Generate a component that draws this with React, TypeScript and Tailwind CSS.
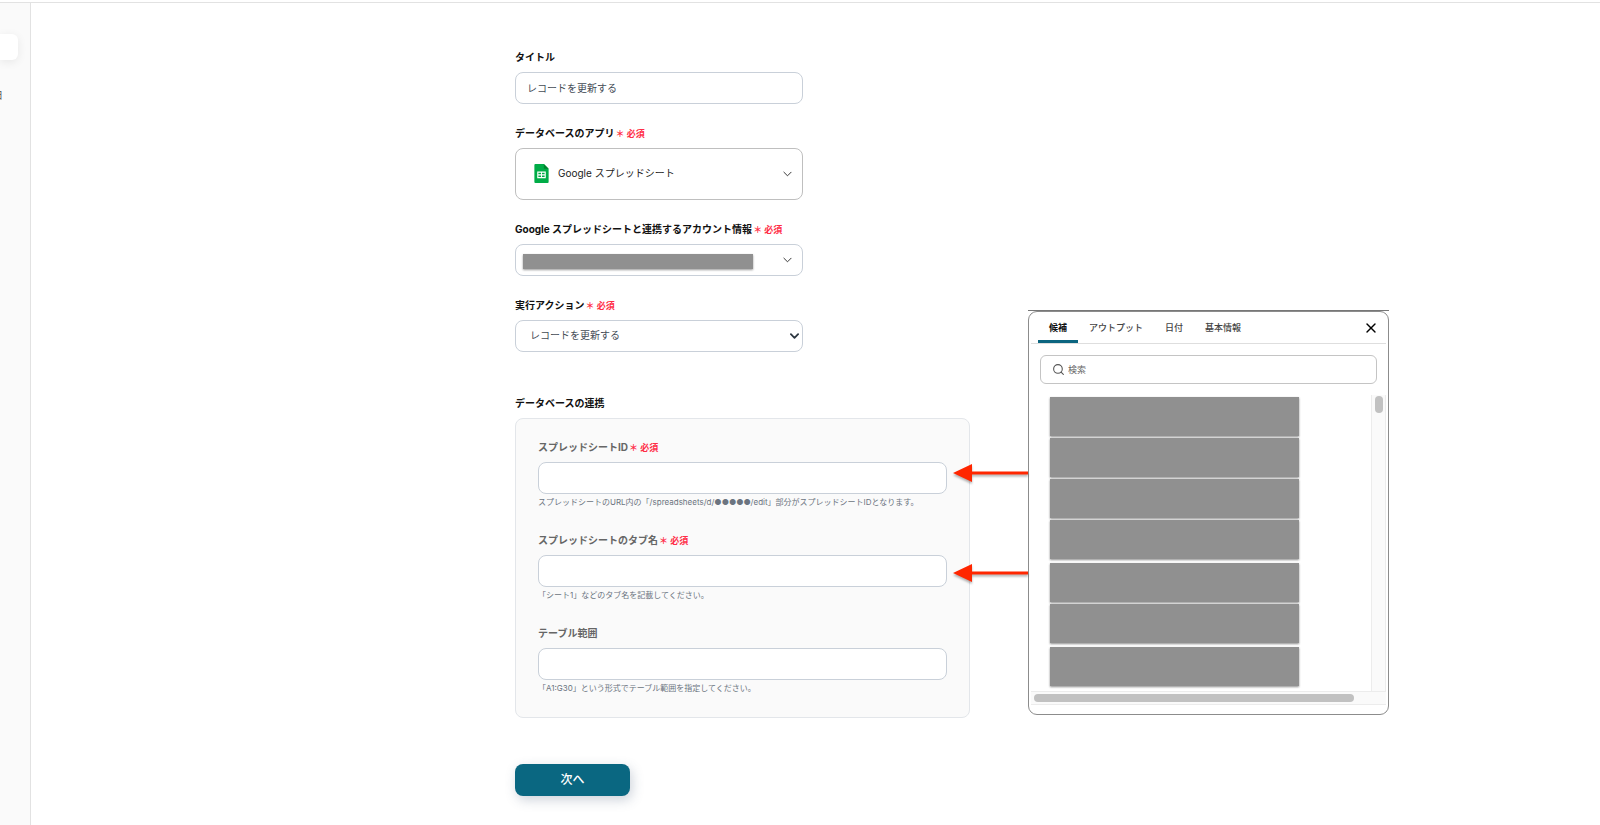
import type { ReactNode } from 'react';
import { Search, X } from 'lucide-react';

const tabs = ['候補', 'アウトプット', '日付', '基本情報'];

// masked candidates, in the groups they are listed in
const candidateGroups = [4, 2, 1];

const databaseFields = [
  {
    id: 'spreadsheet-id',
    label: 'スプレッドシートID',
    required: true,
    help: 'スプレッドシートのURL内の「/spreadsheets/d/●●●●●/edit」部分がスプレッドシートIDとなります。',
  },
  {
    id: 'tab-name',
    label: 'スプレッドシートのタブ名',
    required: true,
    help: '「シート1」などのタブ名を記載してください。',
  },
  {
    id: 'table-range',
    label: 'テーブル範囲',
    required: false,
    help: '「A1:G30」という形式でテーブル範囲を指定してください。',
  },
];

function Required() {
  return <span className="ml-px text-[9px] leading-none font-bold text-[#ff2d46]">＊ 必須</span>;
}

function Field({ id, label, required, children }: { id: string; label: string; required?: boolean; children: ReactNode }) {
  return (
    <div>
      <label htmlFor={id} className="mb-[6px] flex h-[18px] items-center text-[10px] font-bold text-[#111111]">
        {label}
        {required && <Required />}
      </label>
      {children}
    </div>
  );
}

function Chevron({ className }: { className: string }) {
  return (
    <svg viewBox="0 0 10 6" className={className} fill="none" stroke="currentColor" strokeLinecap="round" strokeLinejoin="round">
      <path d="M1 1l4 4 4-4" />
    </svg>
  );
}

function SheetsIcon({ className }: { className: string }) {
  return (
    <svg viewBox="0 0 15 20" className={className}>
      <path d="M1 0h9l5 5v14a1 1 0 0 1-1 1H1a1 1 0 0 1-1-1V1a1 1 0 0 1 1-1z" fill="#00ac47" />
      <path d="M10 0l5 5h-5z" fill="#00832d" />
      <path d="M3 8h9v7H3zM4.2 9.2v1.7H7V9.2zM8 9.2v1.7h2.8V9.2zM4.2 12v1.8H7V12zM8 12v1.8h2.8V12z" fill="#fff" fillRule="evenodd" />
    </svg>
  );
}

function Arrow({ className }: { className: string }) {
  return (
    <svg viewBox="0 0 75 20" className={`absolute right-full h-5 w-[75px] drop-shadow-[0_2px_1px_rgba(0,0,0,0.3)] ${className}`} fill="#ff2600">
      <path d="M0 10L19 1v7.5h56v3H19V19z" />
    </svg>
  );
}

function CandidatePanel() {
  return (
    <aside className="absolute top-[307px] left-[513px] w-[361px] border-t border-[#777777]">
      <Arrow className="top-[152px]" />
      <Arrow className="top-[252px]" />
      <div className="flex h-[404px] flex-col rounded-[9px] border border-[#8c8c8c] bg-white px-[2px] pb-[9px]">
        <div className="flex h-[32px] shrink-0 items-stretch border-b border-[#dedede] pl-[7px]" role="tablist">
          {tabs.map((tab, i) => (
            <button
              key={tab}
              type="button"
              role="tab"
              aria-selected={i === 0}
              className={
                i === 0
                  ? 'border-b-3 border-[#0b6580] px-[11px] pt-[3px] text-[9px] font-bold text-[#111111]'
                  : 'border-b-3 border-transparent px-[11px] pt-[3px] text-[9px] font-medium text-[#444444]'
              }
            >
              {tab}
            </button>
          ))}
          <button type="button" aria-label="閉じる" className="mr-[7px] ml-auto">
            <X className="size-4 text-black" strokeWidth={2} />
          </button>
        </div>

        <div className="relative mt-[11px] mr-[9px] ml-[9px] shrink-0">
          <Search className="absolute top-2 left-3 size-[13px] text-[#555555]" strokeWidth={2} />
          <input
            type="search"
            aria-label="検索"
            placeholder="検索"
            className="block h-[29px] w-full rounded-md border border-[#c4c4c4] bg-white pr-3 pl-[27px] text-[9px] placeholder:text-[#666666]"
          />
        </div>

        <div className="mt-[11px] flex min-h-0 flex-1">
          <div className="flex flex-1 flex-col gap-1 pt-[2px] pl-[19px]">
            {candidateGroups.map((count, group) => (
              <div key={group} className="flex flex-col gap-[2px]">
                {Array.from({ length: count }, (_, i) => (
                  <div key={i} className="h-[39px] w-[249px] bg-[#909090] shadow-[0_1px_2px_rgba(0,0,0,0.45)]" />
                ))}
              </div>
            ))}
          </div>
          <div className="w-[15px] border-x border-[#ececec] bg-[#fafafa] pt-px">
            <div className="mx-auto h-[17px] w-2 rounded-full bg-[#c1c1c1]" />
          </div>
        </div>
        <div className="flex h-[14px] shrink-0 items-center border-y border-[#ececec] bg-[#fafafa] pl-[3px]">
          <div className="h-2 w-[320px] rounded-full bg-[#c1c1c1]" />
        </div>
      </div>
    </aside>
  );
}

export default function App() {
  return (
    <div className="flex min-h-screen flex-col overflow-hidden bg-white font-['Inter','Noto_Sans_CJK_JP',sans-serif] text-[#333333]">
      <header className="h-[3px] border-b border-[#e2e2e2]" />
      <div className="flex flex-1">
        <nav className="w-[31px] shrink-0 border-r border-[#e2e2e2] bg-[#fafafa] pt-[31px]">
          <div className="h-[26px] w-[18px] rounded-r-md bg-white shadow-[0_2px_10px_rgba(0,0,0,0.08)]" />
          <a href="#" className="mt-[27px] flex w-[3px] justify-end overflow-hidden text-[10px] leading-4 text-[#555555]">
            日
          </a>
        </nav>

        <main className="flex-1">
          <form className="relative mx-auto w-full max-w-[601px] pt-[45px]">
            <div className="flex w-[288px] flex-col gap-5">
              <Field id="title" label="タイトル">
                <input
                  id="title"
                  defaultValue="レコードを更新する"
                  className="block h-8 w-full rounded-lg border border-[#c9d0d9] px-[11px] pb-[2px] text-[10px] text-[#444c56]"
                />
              </Field>

              <Field id="app" label="データベースのアプリ" required>
                <div className="relative">
                  <SheetsIcon className="absolute top-4 left-[19px] h-[19px] w-[15px]" />
                  <select id="app" className="block h-[52px] w-full appearance-none rounded-lg border border-[#bfbfbf] bg-transparent pb-[2px] pl-[42px] text-[10px] text-[#222222]">
                    <option>Google スプレッドシート</option>
                  </select>
                  <Chevron className="pointer-events-none absolute top-[23px] right-[11px] h-[6px] w-[9px] text-[#222222]" />
                </div>
              </Field>

              <Field id="account" label="Google スプレッドシートと連携するアカウント情報" required>
                <div className="relative">
                  <select id="account" className="block h-8 w-full appearance-none rounded-lg border border-[#c9d0d9] bg-transparent px-3 text-[10px]" />
                  <div className="pointer-events-none absolute top-[10px] left-2 h-[15px] w-[230px] bg-[#909090] shadow-[0_1px_2px_rgba(0,0,0,0.4)]" />
                  <Chevron className="pointer-events-none absolute top-[13px] right-[11px] h-[6px] w-[9px] text-[#222222]" />
                </div>
              </Field>

              <Field id="action" label="実行アクション" required>
                <div className="relative">
                  <select id="action" className="block h-8 w-full appearance-none rounded-lg border border-[#c9d0d9] bg-transparent px-[14px] pb-[2px] text-[10px] text-[#444c56]">
                    <option>レコードを更新する</option>
                  </select>
                  <Chevron className="pointer-events-none absolute top-[13px] right-1 h-[6px] w-[9px] stroke-2 text-[#2c3640]" />
                </div>
              </Field>
            </div>

            <section className="mt-[42px] w-[455px]">
              <h2 className="mb-[6px] text-[10px] leading-[18px] font-bold text-[#111111]">データベースの連携</h2>
              <div className="flex flex-col gap-[21px] rounded-lg border border-[#e3e6ea] bg-[#fafafa] px-[22px] pt-[19px] pb-[21px]">
                {databaseFields.map((field) => (
                  <div key={field.id}>
                    <label htmlFor={field.id} className="mb-[6px] flex h-[18px] items-center text-[10px] font-bold text-[#666666]">
                      {field.label}
                      {field.required && <Required />}
                    </label>
                    <input id={field.id} className="block h-8 w-full rounded-lg border border-[#c9d0d9] bg-white px-3 text-[10px]" />
                    <p className="text-[8px] leading-4 whitespace-nowrap text-[#6b7480]">{field.help}</p>
                  </div>
                ))}
              </div>
            </section>

            <button
              type="button"
              className="mt-[46px] block h-8 w-[115px] rounded-lg bg-[#0a6781] text-[12px] font-medium text-white shadow-[2px_4px_12px_rgba(60,80,110,0.25)]"
            >
              次へ
            </button>

            <CandidatePanel />
          </form>
        </main>
      </div>
    </div>
  );
}
